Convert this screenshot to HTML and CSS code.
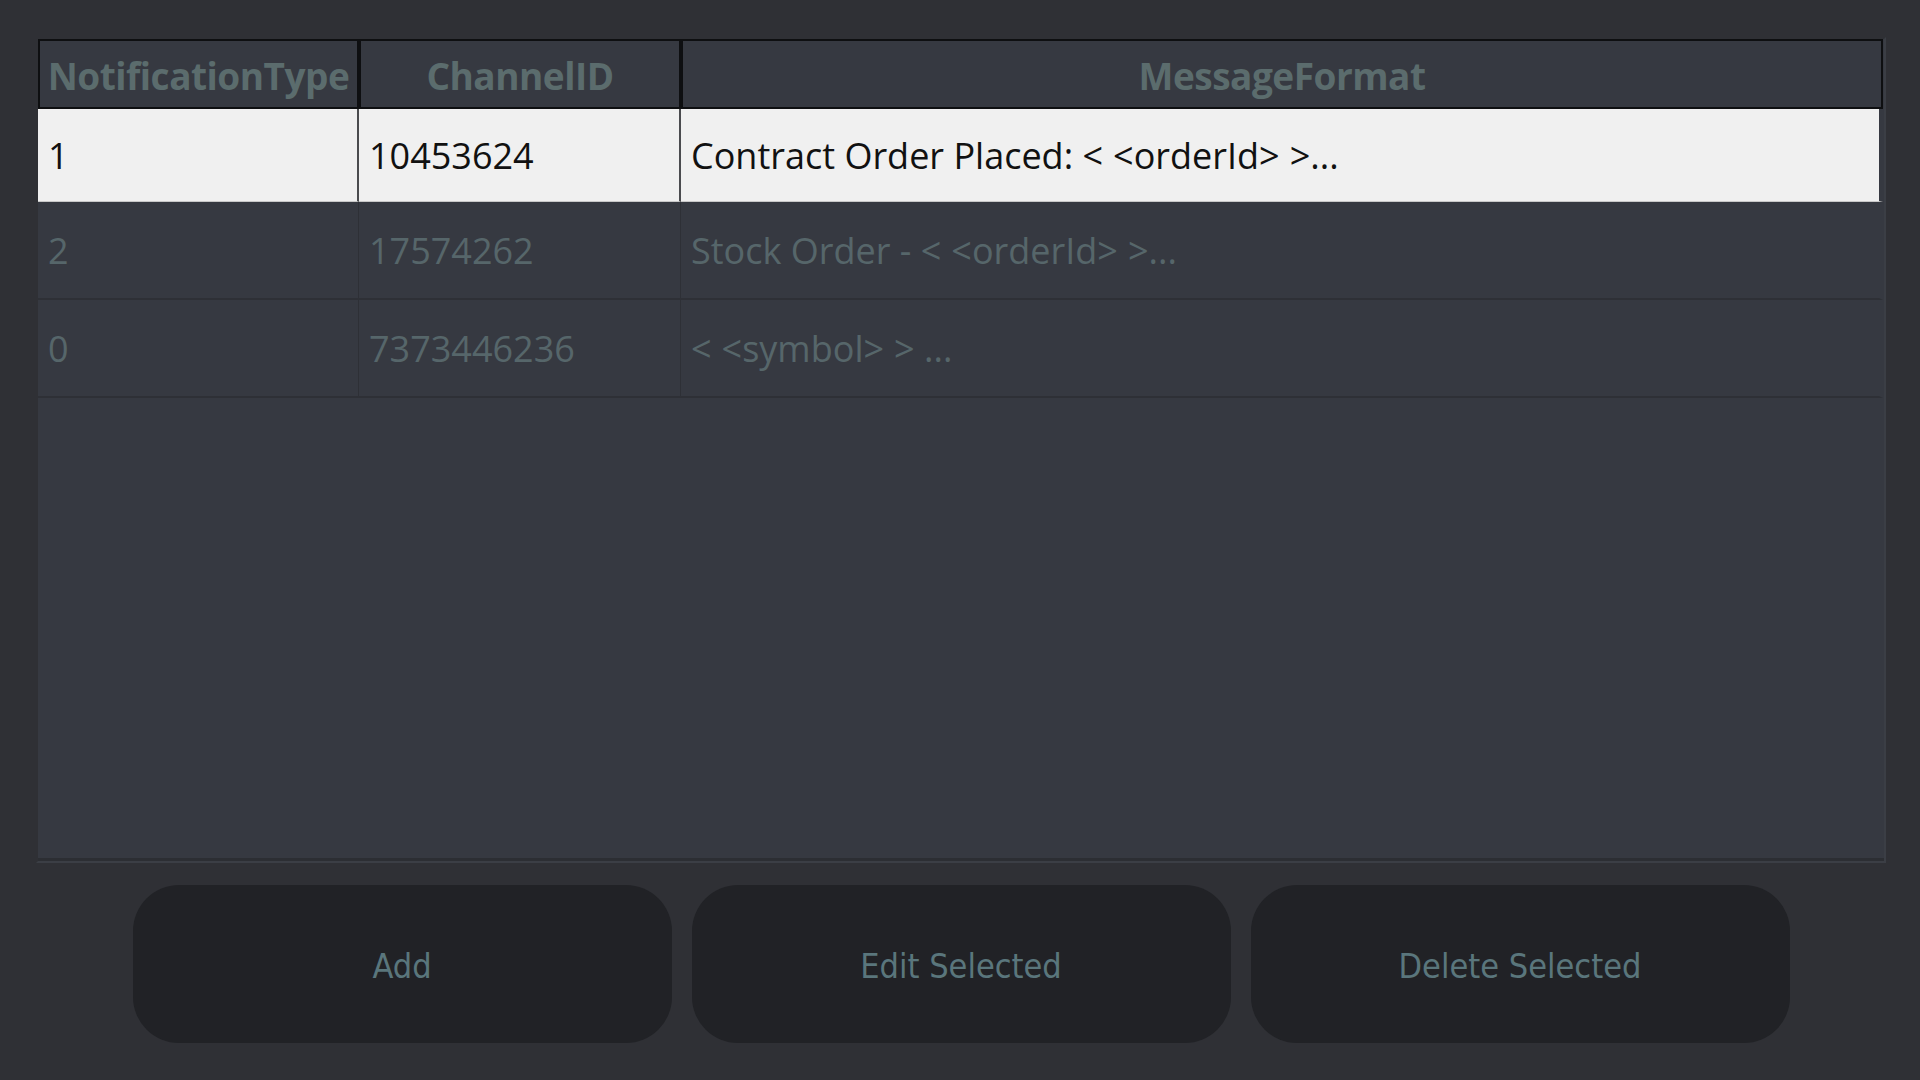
FILE: index.html
```html
<!DOCTYPE html>
<html>
<head>
<meta charset="utf-8">
<link rel="stylesheet" href="styles.css">
</head>
<body>
<div class="window">
  <div class="frame">
    <table class="grid">
      <colgroup>
        <col class="c1"><col class="c2"><col class="c3">
      </colgroup>
      <thead>
        <tr>
          <th>NotificationType</th>
          <th>ChannelID</th>
          <th>MessageFormat</th>
        </tr>
      </thead>
      <tbody>
        <tr class="selected first">
          <td>1</td>
          <td>10453624</td>
          <td>Contract Order Placed: <span class="ang">&lt;</span>&lt;orderId<span class="ang">&gt;</span>&gt;...</td>
        </tr>
        <tr>
          <td>2</td>
          <td>17574262</td>
          <td>Stock Order - <span class="ang">&lt;</span>&lt;orderId<span class="ang">&gt;</span>&gt;...</td>
        </tr>
        <tr>
          <td>0</td>
          <td>7373446236</td>
          <td><span class="ang">&lt;</span>&lt;symbol<span class="ang">&gt;</span>&gt; ...</td>
        </tr>
      </tbody>
    </table>
  </div>
  <div class="actions">
    <button class="btn">Add</button>
    <button class="btn">Edit Selected</button>
    <button class="btn">Delete Selected</button>
  </div>
</div>
</body>
</html>
```

FILE: styles.css
```css
html, body {
  margin: 0;
  padding: 0;
  background: #2f3035;
  width: 1920px;
  height: 1080px;
  overflow: hidden;
}

.window {
  display: flex;
  flex-direction: column;
  padding: 37px 34px 0 36px;
}

.frame {
  width: 1846px;
  height: 822px;
  background: #363941;
  border: 2px solid #3b3e45;
  border-top-color: #2f3035;
  border-left-color: #2f3035;
  box-shadow: inset 0 -3px 0 #2c2e33;
}

.grid {
  border-collapse: separate;
  border-spacing: 0;
  table-layout: fixed;
  width: 1845px;
  font-family: "Open Sans", "Liberation Sans", sans-serif;
}

.c1 { width: 321px; }
.c2 { width: 322px; }
.c3 { width: 1202px; }

.grid th {
  height: 64px;
  padding: 2px 0 0 0;
  background: #363941;
  border: 2px solid #0e0f11;
  color: #5b6c6d;
  font-weight: 700;
  font-size: 37px;
  letter-spacing: -0.5px;
  text-align: center;
  vertical-align: middle;
  line-height: 1;
  white-space: nowrap;
}

.grid td {
  padding: 0 0 0 10px;
  height: 96px;
  font-size: 36px;
  color: #56666a;
  border-right: 1px solid #2e3036;
  border-bottom: 2px solid #2e3036;
  white-space: nowrap;
  vertical-align: middle;
}

.ang {
  letter-spacing: 10px;
}

.grid td:last-child {
  border-right: 4px solid #363941;
}

.grid tr.first td {
  height: 92px;
}

.grid tr.selected td {
  background: #f0f0f0;
  color: #111;
  border-right: 2px solid #4a4b4e;
  border-bottom: 1px solid #c8c8c8;
}

.grid tr.selected td:last-child {
  border-right: 4px solid #363941;
}

.actions {
  display: flex;
  justify-content: center;
  gap: 20px;
  margin-top: 22px;
}

.btn {
  width: 539px;
  height: 158px;
  border: none;
  border-radius: 46px;
  background: #212226;
  color: #5a767c;
  font-family: "DejaVu Sans Condensed", "DejaVu Sans", sans-serif;
  font-stretch: condensed;
  font-size: 34px;
  padding: 4px 0 0 0;
}
```
